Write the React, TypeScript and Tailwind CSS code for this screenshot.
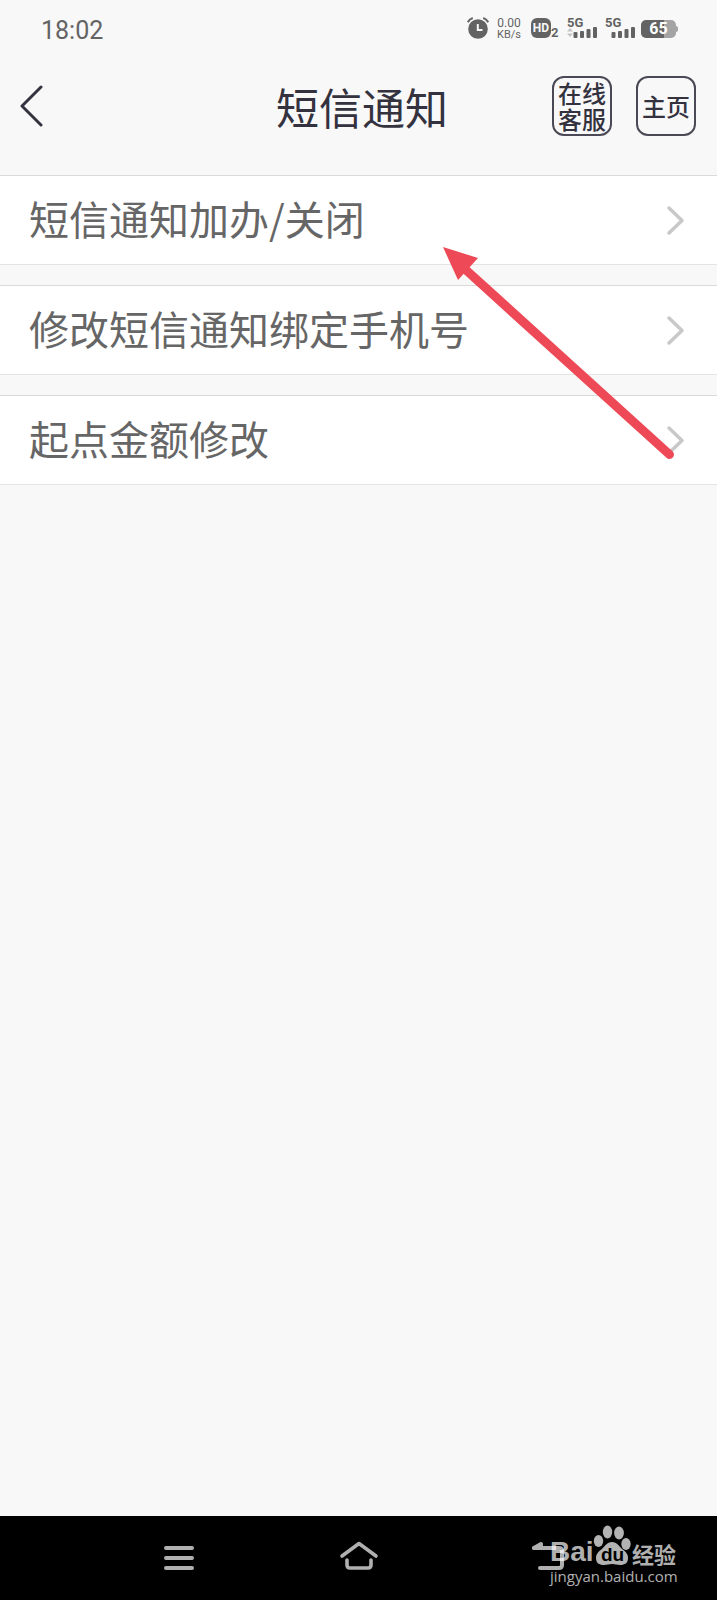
import type { ReactNode } from "react";

const menuItems = ["短信通知加办/关闭", "修改短信通知绑定手机号", "起点金额修改"];

function Signal({ arrows = false }: { arrows?: boolean }) {
  return (
    <div className="flex h-5 w-[30px] flex-col">
      <span className="text-[13px] leading-[9px] font-bold">5G</span>
      <svg width="30" height="11" viewBox="0 0 30 11" fill="currentColor" aria-hidden="true">
        {arrows && <path d="M0 4.5 3 1l3 3.500zM0 6.500h6L3 10z" opacity="0.35" />}
        <rect x="6.500" y="5" width="4" height="6" rx="1" />
        <rect x="13" y="4" width="4" height="7" rx="1" />
        <rect x="19.500" y="2" width="4" height="9" rx="1" />
        <rect x="26" y="0" width="4" height="11" rx="1" />
      </svg>
    </div>
  );
}

function StatusBar() {
  return (
    <div className="flex h-14 items-center justify-between pr-[39px] pl-[41px] font-[Roboto,sans-serif] text-[#636363]">
      <span className="pt-1 text-[25px] leading-none">18:02</span>
      <div className="flex items-center">
        <svg width="22" height="22" viewBox="0 0 22 22" fill="none" stroke="currentColor" aria-hidden="true">
          <circle cx="11" cy="12" r="9.800" fill="currentColor" stroke="none" />
          <path d="M.8 5.200Q2.500 2 5.800 1M21.200 5.200Q19.500 2 16.200 1" strokeWidth="2" />
          <path d="M10.800 7v6h4.700" stroke="#f8f8f8" strokeWidth="2" />
        </svg>
        <div className="ml-2 flex w-6 flex-col items-center pt-[1px] text-[12px] leading-[11px]">
          <span>0.00</span>
          <span className="text-[11px]">KB/s</span>
        </div>
        <div className="ml-[10px] flex items-end">
          <span className="flex h-5 w-5 items-center justify-center rounded-md bg-[#636363] text-[12px] leading-none font-bold text-[#f8f8f8]">
            HD
          </span>
          <span className="w-2 text-[13px] leading-[10px] font-bold">2</span>
        </div>
        <div className="ml-2">
          <Signal arrows />
        </div>
        <div className="ml-2">
          <Signal />
        </div>
        <div className="ml-[6px] flex items-center pt-[2px]">
          <span className="flex h-[18px] w-[35px] items-center justify-center rounded-[5px] bg-linear-to-r from-[#636363] from-65% to-[#a4a4a4] to-65% text-[16px] leading-none font-bold text-white">
            65
          </span>
          <span className="h-[6px] w-[2px] rounded-r-sm bg-[#a4a4a4]" />
        </div>
      </div>
    </div>
  );
}

function HeaderButton({ children }: { children: ReactNode }) {
  return (
    <button
      type="button"
      className="flex h-[60px] w-[60px] items-center justify-center rounded-xl border-2 border-[#4a4955] text-[24px] leading-[26px] font-medium text-[#33323e]"
    >
      <span className="w-12">{children}</span>
    </button>
  );
}

function Header() {
  return (
    <header className="grid grid-cols-[1fr_auto_1fr] items-center pt-5 pr-[21px] pb-[39px] pl-5">
      <button type="button" aria-label="返回" className="w-6">
        <svg width="24" height="44" viewBox="0 0 24 44" fill="none" stroke="#33323e" strokeWidth="3" strokeLinecap="round" strokeLinejoin="round">
          <path d="M21 3 2 22l19 19" />
        </svg>
      </button>
      <h1 className="pl-2 text-[43px] leading-[60px] text-[#33323e]">短信通知</h1>
      <div className="flex justify-end gap-6">
        <HeaderButton>在线客服</HeaderButton>
        <HeaderButton>主页</HeaderButton>
      </div>
    </header>
  );
}

function MenuItem({ label }: { label: string }) {
  return (
    <li>
      <a
        href="#"
        className="flex h-[90px] items-center justify-between border-t border-b border-t-[#dadada] border-b-[#e4e4e4] bg-white pr-8 pl-[29px] text-[40px] leading-[60px] text-[#666]"
      >
        <span className="pb-1">{label}</span>
        <svg width="20" height="32" viewBox="0 0 20 32" fill="none" stroke="#c8c8c8" strokeWidth="3.500" strokeLinecap="round" strokeLinejoin="round" aria-hidden="true">
          <path d="M4 4l13 12.500L4 29" />
        </svg>
      </a>
    </li>
  );
}

function Watermark() {
  return (
    <div className="pointer-events-none absolute right-10 bottom-[14px] w-[127px] text-white/70">
      <div className="flex items-end">
        <span className="w-[43px] font-['Liberation_Sans',sans-serif] text-[28px] leading-[28px] font-bold">Bai</span>
        <div className="relative">
          <svg width="39" height="42" viewBox="0 0 39 42" fill="currentColor" aria-hidden="true">
            <ellipse cx="5.500" cy="17" rx="4.700" ry="6" />
            <ellipse cx="14.500" cy="8" rx="4.700" ry="6.500" />
            <ellipse cx="26" cy="9" rx="4.900" ry="6.500" />
            <ellipse cx="33" cy="20" rx="4.700" ry="6" />
            <path d="M19 18c-5 0-7 4-10 7-4 3-6 5-6 9 0 5 3 7 8 7 3 0 5-1 8-1s5 1 8 1c5 0 8-2 8-7 0-4-2-6-6-9-3-3-5-7-10-7Z" />
          </svg>
          <span className="absolute bottom-[2px] left-[2px] w-[35px] text-center font-['Liberation_Sans',sans-serif] text-[19px] leading-none font-bold text-black">
            du
          </span>
        </div>
        <span className="text-[22px] leading-[26px] font-bold">经验</span>
      </div>
      <div className="font-['Open_Sans',sans-serif] text-[15px] leading-[20px] font-medium">jingyan.baidu.com</div>
    </div>
  );
}

function NavBar() {
  return (
    <nav className="relative grid h-[84px] grid-cols-3 justify-items-center bg-black px-[12.5%] text-[#b0b0b0]">
      <button type="button" aria-label="菜单">
        <svg width="64" height="84" viewBox="0 0 64 84" fill="none" stroke="currentColor" strokeWidth="4" strokeLinecap="round">
          <path d="M19 32h26M19 42h26M19 52h26" />
        </svg>
      </button>
      <button type="button" aria-label="主屏幕">
        <svg width="64" height="84" viewBox="0 0 64 84" fill="none" stroke="currentColor" strokeWidth="3.600" strokeLinecap="round" strokeLinejoin="round">
          <path d="M15 40 32 27.500 49 40M20 44v5q0 3 3 3h18q3 0 3-3v-5" />
        </svg>
      </button>
      <button type="button" aria-label="返回上一页">
        <svg width="64" height="84" viewBox="0 0 64 84" fill="none" stroke="currentColor" strokeWidth="4" strokeLinecap="round" strokeLinejoin="round">
          <path d="M28 32h25q3 0 3 3v14q0 3-3 3H34" />
          <path d="m28 32 7-4v4z" fill="currentColor" />
        </svg>
      </button>
      <Watermark />
    </nav>
  );
}

export default function App() {
  return (
    <div className="flex min-h-screen flex-col bg-[#f8f8f8] font-['Noto_Sans_CJK_SC',sans-serif]">
      <StatusBar />
      <Header />
      <main className="relative flex-1">
        <ul className="flex flex-col gap-5">
          {menuItems.map((label) => (
            <MenuItem key={label} label={label} />
          ))}
        </ul>

        {/* Pointer to the first entry */}
        <svg className="pointer-events-none absolute top-[69px] right-[37px]" width="240" height="216" viewBox="0 0 240 216" aria-hidden="true">
          <path d="M26 26 229.500 210.500" stroke="#ed4956" strokeWidth="9" strokeLinecap="round" />
          <path d="M3 3 38 14 18 36z" fill="#ed4956" />
        </svg>
      </main>
      <NavBar />
    </div>
  );
}
